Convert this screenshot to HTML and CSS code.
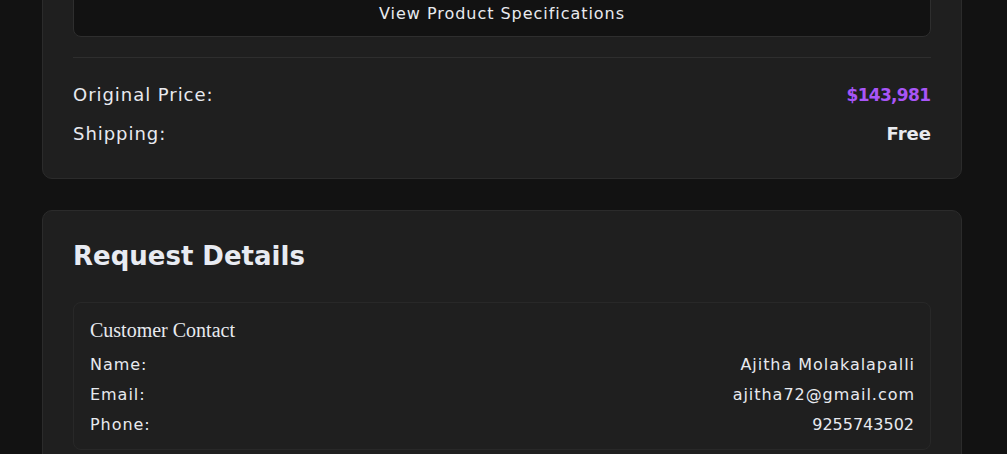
FILE: index.html
```html
<!DOCTYPE html>
<html lang="en">
<head>
<meta charset="utf-8">
<title>Request Details</title>
<link rel="stylesheet" href="styles.css">
</head>
<body>
<main class="page">
  <section class="card summary">
    <button class="spec-btn" type="button">View Product Specifications</button>
    <div class="price-list">
      <div class="price-row">
        <span class="label">Original Price:</span>
        <span class="price">$143,981</span>
      </div>
      <div class="price-row">
        <span class="label">Shipping:</span>
        <span class="free">Free</span>
      </div>
    </div>
  </section>

  <section class="card details">
    <h2 class="card-title">Request Details</h2>
    <div class="panel">
      <h3 class="panel-title">Customer Contact</h3>
      <div class="kv-list">
        <div class="kv"><span>Name:</span><span class="val">Ajitha Molakalapalli</span></div>
        <div class="kv"><span>Email:</span><span class="val">ajitha72@gmail.com</span></div>
        <div class="kv"><span>Phone:</span><span class="num">9255743502</span></div>
      </div>
    </div>
  </section>
</main>
</body>
</html>
```

FILE: styles.css
```css
* { box-sizing: border-box; }

html, body {
  margin: 0;
  padding: 0;
  background: #121212;
  height: 100%;
  overflow: hidden;
}

body {
  font-family: "DejaVu Sans", "Liberation Sans", sans-serif;
  color: #e8eaef;
  letter-spacing: 0.06em;
}

.page {
  width: 920px;
  margin: -42px 0 0 42px;
  display: flex;
  flex-direction: column;
  gap: 31px;
}

.card {
  background: #1f1f1f;
  border: 1px solid #2b2b2b;
  border-radius: 10px;
  padding: 30px;
}

.summary { padding-bottom: 31px; }

.spec-btn {
  display: block;
  width: 100%;
  height: 48px;
  background: #121212;
  border: 1px solid #2e2e2e;
  border-radius: 8px;
  color: #e8eaef;
  font-family: inherit;
  font-size: 16px;
  letter-spacing: 0.06em;
  line-height: 22px;
  padding: 13px 12px 11px;
  cursor: pointer;
}

.price-list {
  margin-top: 20px;
  border-top: 1px solid #2e2e2e;
  padding-top: 23px;
  display: flex;
  flex-direction: column;
  gap: 11px;
}

.price-row {
  display: flex;
  justify-content: space-between;
  align-items: baseline;
  font-size: 18px;
  line-height: 27px;
}

.price {
  color: #a855f7;
  font-weight: bold;
  font-size: 17px;
  letter-spacing: -0.04em;
  margin-right: 0.04em;
}

.free {
  font-weight: bold;
  letter-spacing: 0;
}

.card-title {
  margin: 0 0 30px;
  font-size: 26px;
  line-height: 1.2;
  font-weight: bold;
  letter-spacing: 0;
  color: #e8ebf2;
}

.panel {
  border: 1px solid #282828;
  border-radius: 8px;
  padding: 16px 16px 12px;
}

.panel-title {
  margin: 0 0 12px;
  font-family: "Liberation Serif", "DejaVu Serif", serif;
  font-size: 20px;
  line-height: 22px;
  font-weight: normal;
  letter-spacing: 0;
}

.kv-list {
  display: flex;
  flex-direction: column;
  gap: 6px;
}

.kv {
  display: flex;
  justify-content: space-between;
  font-size: 16px;
  line-height: 24px;
}

.val { margin-right: -0.06em; }

.num { letter-spacing: 0; }
```
